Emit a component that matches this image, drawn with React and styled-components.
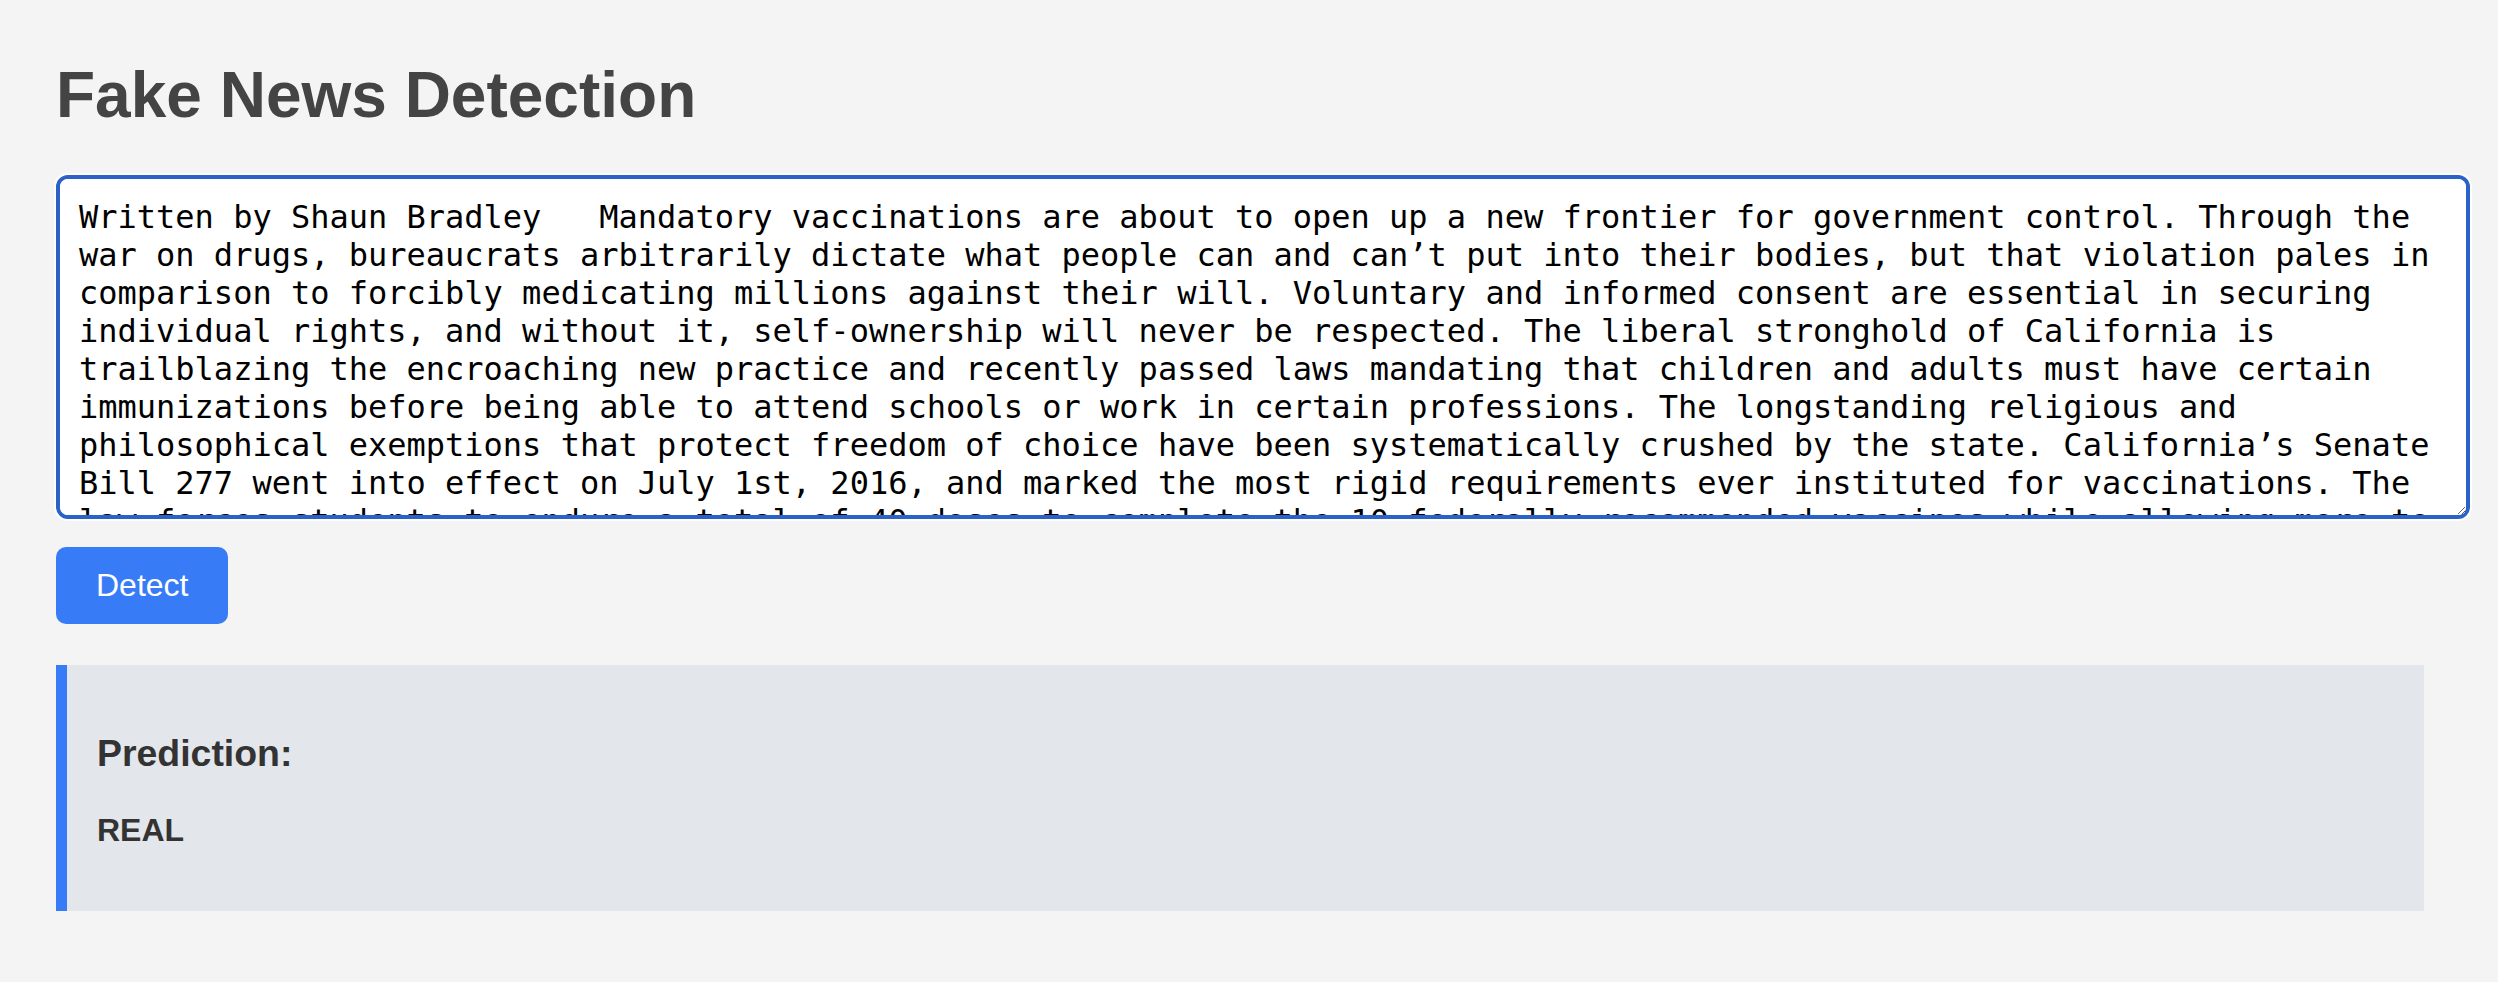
import React, { useState } from "react";
import styled, { createGlobalStyle } from "styled-components";

const ARTICLE =
  "Written by Shaun Bradley   Mandatory vaccinations are about to open up a new frontier for government control. Through the war on drugs, bureaucrats arbitrarily dictate what people can and can’t put into their bodies, but that violation pales in comparison to forcibly medicating millions against their will. Voluntary and informed consent are essential in securing individual rights, and without it, self-ownership will never be respected. The liberal stronghold of California is trailblazing the encroaching new practice and recently passed laws mandating that children and adults must have certain immunizations before being able to attend schools or work in certain professions. The longstanding religious and philosophical exemptions that protect freedom of choice have been systematically crushed by the state. California’s Senate Bill 277 went into effect on July 1st, 2016, and marked the most rigid requirements ever instituted for vaccinations. The law forces students to endure a total of 40 doses to complete the 10 federally recommended vaccines while allowing more to be added at any time in the future, and parents who refuse are left with few options for their children’s education.";

const App = () => {
  const [text, setText] = useState(ARTICLE);
  const [result] = useState("REAL");

  return (
    <>
      <GlobalStyle />
      <Page>
        <Title>Fake News Detection</Title>
        <NewsInput
          value={text}
          onChange={(e) => setText(e.target.value)}
          spellCheck
        />
        <DetectButton type="button">Detect</DetectButton>
        <ResultBox>
          <ResultLabel>Prediction:</ResultLabel>
          <ResultValue>{result}</ResultValue>
        </ResultBox>
      </Page>
    </>
  );
};

//Styled Components
const GlobalStyle = createGlobalStyle`
  body {
    margin: 0;
    background: #f4f4f4;
    font-family: "Liberation Sans", Arial, sans-serif;
  }
`;

const Page = styled.div`
  width: 2368px;
  padding: 58px 0 40px 56px;
  display: flex;
  flex-direction: column;
  align-items: flex-start;
`;

const Title = styled.h1`
  margin: 0 0 43px;
  font-size: 64px;
  font-weight: bold;
  line-height: normal;
  color: #444444;
`;

const NewsInput = styled.textarea`
  display: block;
  box-sizing: content-box;
  width: 2368px;
  height: 298px;
  margin: 0;
  padding: 19px;
  border: 4px solid #2b62c8;
  border-radius: 12px;
  box-shadow: 0 0 0 2px rgba(255, 255, 255, 0.85);
  outline: none;
  background: #ffffff;
  color: #000000;
  font-family: "DejaVu Sans Mono", monospace;
  font-size: 32px;
  line-height: 38px;
  scrollbar-width: none;
  &::-webkit-scrollbar {
    display: none;
  }
`;

const DetectButton = styled.button`
  margin-top: 28px;
  padding: 20px 40px;
  border: none;
  border-radius: 10px;
  background: #387bf6;
  color: #ffffff;
  font-family: "Liberation Sans", Arial, sans-serif;
  font-size: 32px;
  line-height: normal;
  cursor: pointer;
`;

const ResultBox = styled.div`
  align-self: stretch;
  margin-top: 41px;
  padding: 30px;
  border-left: 11px solid #387bf6;
  background: #e3e6ea;
  color: #333333;
`;

const ResultLabel = styled.h3`
  margin: 37px 0;
  font-size: 37.44px;
  font-weight: bold;
  line-height: normal;
`;

const ResultValue = styled.p`
  margin: 37px 0 32px;
  font-size: 32px;
  font-weight: bold;
  line-height: normal;
`;

export default App;
